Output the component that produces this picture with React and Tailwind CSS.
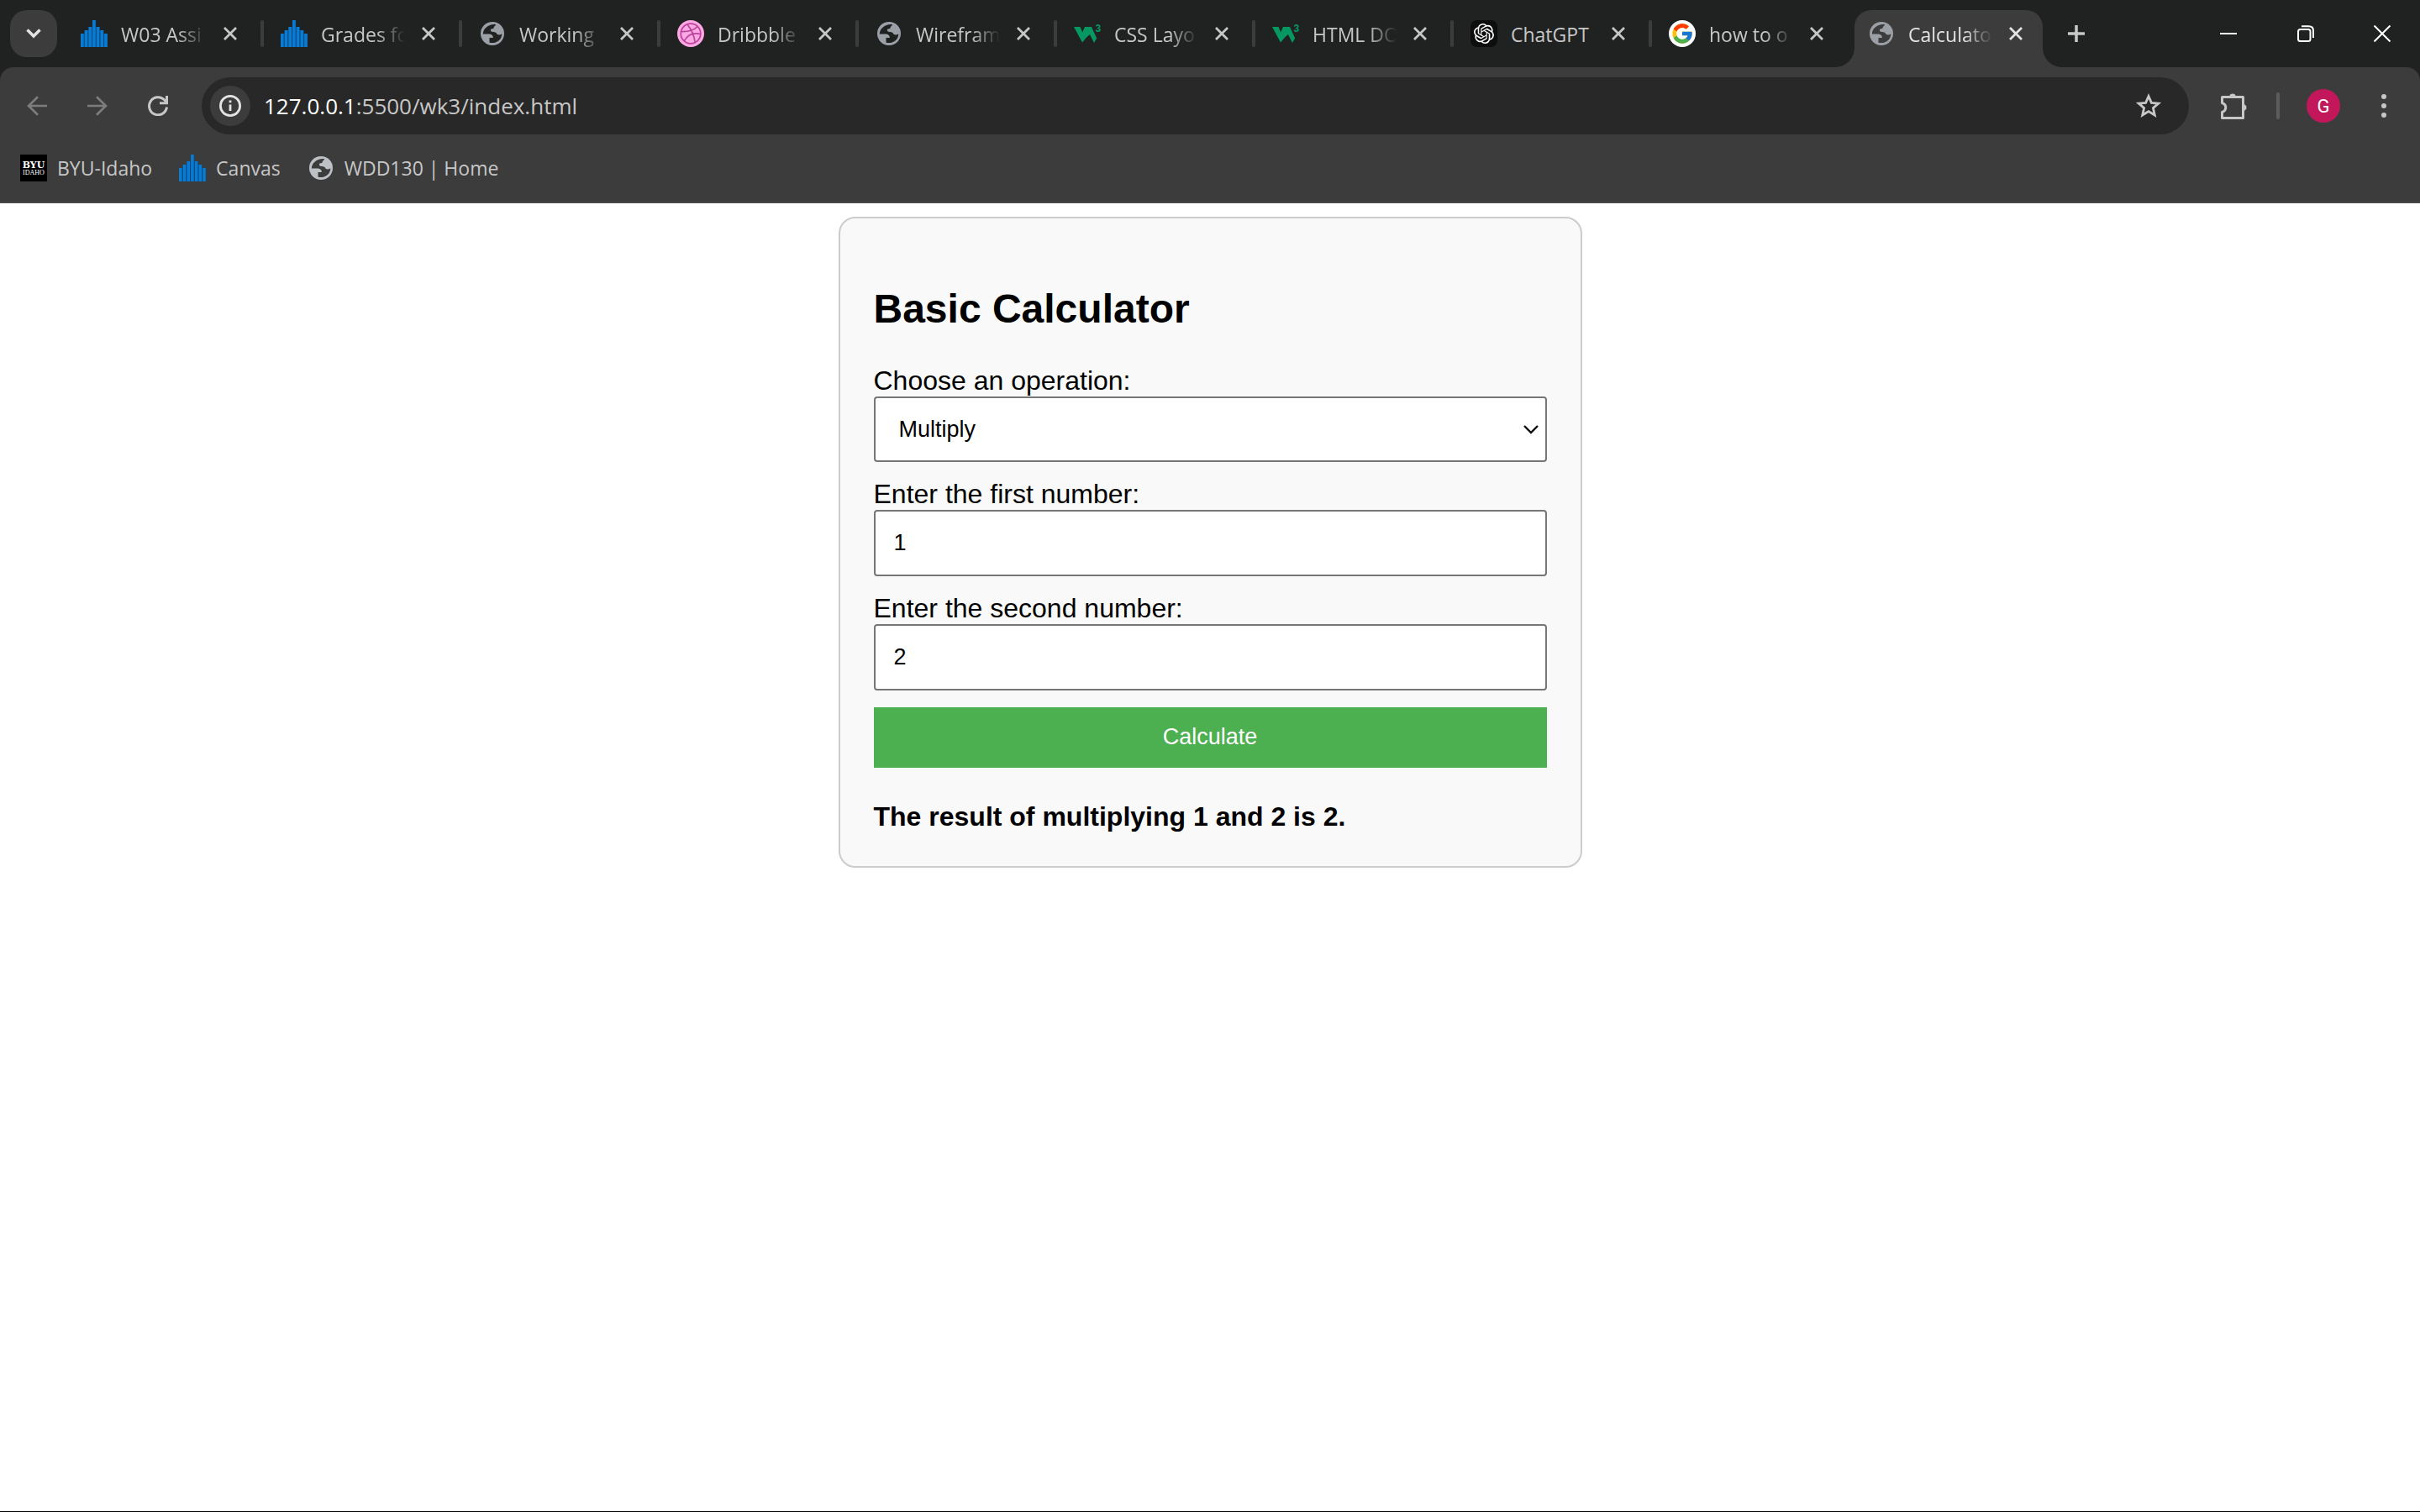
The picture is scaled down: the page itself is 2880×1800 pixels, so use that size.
import { useState } from "react";
import { SiOpenai } from "react-icons/si";
import { FcGoogle } from "react-icons/fc";

function CanvasLogo() {
  const heights = [16, 20, 24, 32, 24, 20, 16];
  return (
    <svg viewBox="0 0 32 32" className="size-8 shrink-0" aria-hidden="true">
      <path
        fill="#00477c"
        d="M0 16H4.6V12H9.2V8H13.8V0H18.2V8H22.8V12H27.4V16H32V32H0Z"
      />
      {heights.map((h, i) => (
        <rect key={i} x={i * 4.7} y={32 - h} width="3.6" height={h} fill="#0a7bd1" />
      ))}
    </svg>
  );
}

function Globe({ color = "#9aa0a6", hole = "#202222" }) {
  return (
    <svg viewBox="-2 -2 32 32" className="size-8 shrink-0" aria-hidden="true">
      <circle cx="14" cy="14" r="14" fill={color} />
      <path
        fill={hole}
        d="M18 3C10 2 3 7.500 2.800 14.500H10.500C13.500 14.800 15 16.500 14.800 19H10.500V24.700C18.500 26.500 25.300 21.500 25.300 14.200C23.500 15.600 21.200 15.800 19.500 14.800C19 12.800 17.300 12 15 12C12.500 12 11.300 11 12.200 8.800C13.500 7.800 15.500 9 15.700 6.800C15.800 5 18 5 18 3Z"
      />
    </svg>
  );
}

function Dribbble() {
  return (
    <svg viewBox="0 0 32 32" className="size-8 shrink-0" fill="none" aria-hidden="true">
      <circle cx="16" cy="16" r="16" fill="#ffa8e6" />
      <g stroke="#b8459a" strokeWidth="1.700">
        <circle cx="16" cy="16" r="11.800" />
        <path d="M12 5.200C16.500 10.500 20 17.500 21.200 26.500" />
        <path d="M4.500 13.500C12 13.800 20 12 24 7.500" />
        <path d="M8.300 24.800C12 18 19 14.500 27.800 16.500" />
      </g>
    </svg>
  );
}

function W3Logo() {
  return (
    <svg viewBox="0 0 32 32" className="size-8 shrink-0" aria-hidden="true">
      <path
        fill="#059862"
        d="M0 8H7.500L10.200 14.500L13 8H21L27.200 21.500L24 27L19 17L15.500 20L10 26.500Z"
      />
      <text
        x="25.500"
        y="14"
        fontSize="12"
        fontFamily="Liberation Sans, sans-serif"
        fontWeight="700"
        fill="#059862"
      >
        3
      </text>
    </svg>
  );
}

function ChatGptLogo() {
  return (
    <span className="flex size-8 shrink-0 items-center justify-center rounded-lg bg-[#0d0d0d] text-white">
      <SiOpenai className="size-6" />
    </span>
  );
}

function GoogleLogo() {
  return (
    <span className="flex size-8 shrink-0 items-center justify-center rounded-full bg-white">
      <FcGoogle className="size-7" />
    </span>
  );
}

function ByuLogo() {
  return (
    <svg viewBox="0 0 32 32" className="size-8 shrink-0" aria-hidden="true">
      <rect width="32" height="32" fill="#000" />
      <text x="16" y="15.500" textAnchor="middle" fontSize="11" fontWeight="700" fontFamily="DejaVu Serif, serif" fill="#fff">
        BYU
      </text>
      <text x="16" y="23.500" textAnchor="middle" fontSize="8" fontFamily="Liberation Serif, serif" fill="#fff">
        IDAHO
      </text>
    </svg>
  );
}

function Cross() {
  return (
    <svg viewBox="0 0 16 16" className="size-4" stroke="currentColor" strokeWidth="2.800" aria-hidden="true">
      <path d="M1 1L15 15M15 1L1 15" />
    </svg>
  );
}

const tabs = [
  { title: "W03 Assi", icon: <CanvasLogo /> },
  { title: "Grades fo", icon: <CanvasLogo /> },
  { title: "Working", icon: <Globe /> },
  { title: "Dribbble", icon: <Dribbble /> },
  { title: "Wirefram", icon: <Globe /> },
  { title: "CSS Layo", icon: <W3Logo /> },
  { title: "HTML DO", icon: <W3Logo /> },
  { title: "ChatGPT", icon: <ChatGptLogo />, fits: true },
  { title: "how to o", icon: <GoogleLogo /> },
];

const TITLE = "min-w-0 flex-1 overflow-hidden pt-[2px] whitespace-nowrap";
const FADED = TITLE + " [mask-image:linear-gradient(to_right,black_66%,transparent)]";

function Tab({ tab, first }) {
  return (
    <div className={first ? "flex h-14 w-[238px] items-center pr-5" : "flex h-14 w-[236px] items-center pr-5"}>
      <span className={first ? "h-8 w-1" : "h-8 w-1 rounded-full bg-[#3c3c3c]"} />
      <button type="button" className="ml-5 flex min-w-0 flex-1 items-center gap-4 text-left">
        {tab.icon}
        <span className={tab.fits ? TITLE : FADED}>{tab.title}</span>
      </button>
      <button type="button" aria-label={"Close " + tab.title} className="ml-3 flex size-8 items-center justify-center">
        <Cross />
      </button>
    </div>
  );
}

function Flare({ className, d }) {
  return (
    <svg viewBox="0 0 24 24" className={className} fill="#3c3c3c" aria-hidden="true">
      <path d={d} />
    </svg>
  );
}

function TabStrip() {
  return (
    <div className="flex h-20 items-start bg-[#202222] pt-3 text-[23px] text-[#c7c7c7]">
      <button
        type="button"
        aria-label="Search tabs"
        className="mr-1 ml-3 flex h-14 w-14 items-center justify-center rounded-[20px] bg-[#3c3c3c] text-[#e3e3e3]"
      >
        <svg viewBox="0 0 18 12" className="h-3 w-[18px]" fill="none" stroke="currentColor" strokeWidth="3.500" aria-hidden="true">
          <path d="M1.500 1.500L9 9L16.500 1.500" />
        </svg>
      </button>
      {tabs.map((tab, i) => (
        <Tab key={tab.title} tab={tab} first={i === 0} />
      ))}
      <div className="relative ml-[9px] flex h-17 w-56 items-start rounded-t-[20px] bg-[#3c3c3c] px-4 text-[#e3e3e3]">
        <Flare className="absolute bottom-0 -left-6 size-6" d="M24 0V24H0C14 24 24 14 24 0Z" />
        <Flare className="absolute -right-6 bottom-0 size-6" d="M0 0V24H24C10 24 0 14 0 0Z" />
        <div className="flex h-14 w-full items-center">
          <button type="button" className="flex min-w-0 flex-1 items-center gap-4 text-left">
            <Globe hole="#3c3c3c" />
            <span className={FADED}>Calculato</span>
          </button>
          <button type="button" aria-label="Close Calculator" className="ml-3 flex size-8 items-center justify-center">
            <Cross />
          </button>
        </div>
      </div>
      <button type="button" aria-label="New tab" className="ml-3 flex size-14 items-center justify-center">
        <svg viewBox="0 0 20 20" className="size-5" stroke="currentColor" strokeWidth="3.500" aria-hidden="true">
          <path d="M10 0V20M0 10H20" />
        </svg>
      </button>
      <div className="ml-auto flex text-white">
        <button type="button" aria-label="Minimize" className="flex h-14 w-[92px] items-center justify-center">
          <span className="h-[2px] w-5 bg-white" />
        </button>
        <button type="button" aria-label="Restore" className="flex h-14 w-[92px] items-center justify-center">
          <svg viewBox="0 0 20 20" className="size-5" fill="none" stroke="currentColor" strokeWidth="2" aria-hidden="true">
            <rect x="1" y="5" width="14.500" height="14" rx="2.500" />
            <path d="M5 1.200H13.500C17 1.200 19 3.200 19 6.500V15" />
          </svg>
        </button>
        <button type="button" aria-label="Close" className="flex h-14 w-[90px] items-center justify-center">
          <svg viewBox="0 0 20 20" className="size-5" stroke="currentColor" strokeWidth="2" aria-hidden="true">
            <path d="M0.500 0.500L19.500 19.500M19.500 0.500L0.500 19.500" />
          </svg>
        </button>
      </div>
    </div>
  );
}

function Toolbar() {
  return (
    <div className="flex h-23 items-center pr-[7px] pl-2 text-[#c7c7c7]">
      <button type="button" aria-label="Back" className="flex size-18 items-center justify-center text-[#7d7d7d]">
        <svg viewBox="0 0 24 24" className="size-6" fill="none" stroke="currentColor" strokeWidth="2.600" aria-hidden="true">
          <path d="M13 1.200L2 12L13 22.800M2 12H24" />
        </svg>
      </button>
      <button type="button" aria-label="Forward" className="flex size-18 items-center justify-center text-[#7d7d7d]">
        <svg viewBox="0 0 24 24" className="size-6" fill="none" stroke="currentColor" strokeWidth="2.600" aria-hidden="true">
          <path d="M11 1.200L22 12L11 22.800M22 12H0" />
        </svg>
      </button>
      <button type="button" aria-label="Reload" className="flex size-18 items-center justify-center">
        <svg viewBox="0 0 24 24" className="size-6" fill="none" stroke="currentColor" strokeWidth="3" aria-hidden="true">
          <path d="M22.500 13.500A10.500 10.500 0 1 1 19.500 4.800L22 7.500" />
          <path d="M22.500 0V8.700H14" />
        </svg>
      </button>
      <div className="ml-4 flex h-17 flex-1 items-center rounded-full bg-[#282828] pr-8 pl-[10px]">
        <button type="button" aria-label="View site information" className="flex size-12 items-center justify-center rounded-full bg-[#3c3c3c] text-[#e3e3e3]">
          <svg viewBox="0 0 26 26" className="size-[26px]" fill="none" stroke="currentColor" strokeWidth="2.800" aria-hidden="true">
            <circle cx="13" cy="13" r="11.600" />
            <path d="M13 11.500V19M13 6.500V9.300" />
          </svg>
        </button>
        <p className="ml-4 flex-1 text-[26px] text-[#c7c7c7]">
          <span className="text-white">127.0.0.1</span>:5500/wk3/index.html
        </p>
        <button type="button" aria-label="Bookmark this page" className="flex size-8 items-center justify-center">
          <svg viewBox="0 0 32 32" className="size-8" fill="none" stroke="currentColor" strokeWidth="2.800" aria-hidden="true">
            <path d="M16 4.500L19.400 12.300L27.800 13L21.400 18.600L23.300 27L16 22.600L8.700 27L10.600 18.600L4.200 13L12.600 12.300Z" />
          </svg>
        </button>
      </div>
      <button type="button" aria-label="Extensions" className="ml-[38px] flex size-8 items-center justify-center">
        <svg viewBox="0 0 32 32" className="size-8" aria-hidden="true">
          <path
            fill="none"
            stroke="currentColor"
            strokeWidth="3"
            strokeLinejoin="round"
            d="M1.500 5.500H26.500V30.500H1.500V23.500C7.200 21.500 7.200 14.500 1.500 12.500Z"
          />
          <path fill="currentColor" d="M10 5A4.200 5 0 0 1 18 5ZM27 14A5 4.200 0 0 1 27 22Z" />
        </svg>
      </button>
      <span className="ml-[34px] h-8 w-1 rounded-full bg-[#5c5c5c]" />
      <button
        type="button"
        aria-label="Profile"
        className="ml-8 flex size-10 items-center justify-center rounded-full bg-[#c2185b] font-[Roboto,sans-serif] text-[22px] text-white"
      >
        G
      </button>
      <button type="button" aria-label="Menu" className="ml-4 flex size-18 items-center justify-center">
        <svg viewBox="0 0 6 28" className="h-7 w-[6px]" fill="currentColor" aria-hidden="true">
          <circle cx="3" cy="3" r="3" />
          <circle cx="3" cy="14" r="3" />
          <circle cx="3" cy="25" r="3" />
        </svg>
      </button>
    </div>
  );
}

function Bookmarks() {
  return (
    <nav className="flex h-[68px] items-center gap-8 px-6 pb-3 text-[23px] text-[#c7c7c7]">
      <a href="#byu" className="flex items-center gap-3">
        <ByuLogo />
        BYU-Idaho
      </a>
      <a href="#canvas" className="flex items-center gap-3">
        <CanvasLogo />
        Canvas
      </a>
      <a href="#home" className="flex items-center gap-3">
        <Globe color="#bdc1c6" hole="#3c3c3c" />
        WDD130 | Home
      </a>
    </nav>
  );
}

const operations = {
  add: ["Add", "adding", (a, b) => a + b],
  subtract: ["Subtract", "subtracting", (a, b) => a - b],
  multiply: ["Multiply", "multiplying", (a, b) => a * b],
  divide: ["Divide", "dividing", (a, b) => a / b],
};

const FIELD = "block w-full rounded-[4px] border-2 border-[#767676] bg-white text-[27px] text-black";

function Calculator() {
  const [op, setOp] = useState("multiply");
  const [first, setFirst] = useState("1");
  const [second, setSecond] = useState("2");
  const [result, setResult] = useState("The result of multiplying 1 and 2 is 2.");

  function calculate(event) {
    event.preventDefault();
    const [, verb, run] = operations[op];
    setResult(`The result of ${verb} ${first} and ${second} is ${run(Number(first), Number(second))}.`);
  }

  return (
    <form
      onSubmit={calculate}
      className="mx-auto w-full max-w-[885px] rounded-[20px] border-2 border-[#ccc] bg-[#f9f9f9] p-10 font-['Liberation_Sans',Arial,sans-serif] text-[32px] leading-[37px] text-black"
    >
      <h1 className="my-10 text-[48px] leading-[55px] font-bold">Basic Calculator</h1>
      <label htmlFor="operation" className="block">
        Choose an operation:
      </label>
      <div className="relative mb-5">
        <select
          id="operation"
          value={op}
          onChange={(e) => setOp(e.target.value)}
          className={FIELD + " h-[78px] appearance-none pl-7"}
        >
          {Object.entries(operations).map(([key, [label]]) => (
            <option key={key} value={key}>
              {label}
            </option>
          ))}
        </select>
        <svg
          viewBox="0 0 18 11"
          className="pointer-events-none absolute top-[34px] right-[10px] h-[11px] w-[18px]"
          fill="none"
          stroke="#111"
          strokeWidth="2.400"
          aria-hidden="true"
        >
          <path d="M1 1L9 9L17 1" />
        </svg>
      </div>
      <label htmlFor="first" className="block">
        Enter the first number:
      </label>
      <input
        id="first"
        type="number"
        value={first}
        onChange={(e) => setFirst(e.target.value)}
        className={FIELD + " mb-5 h-[79px] px-[22px]"}
      />
      <label htmlFor="second" className="block">
        Enter the second number:
      </label>
      <input
        id="second"
        type="number"
        value={second}
        onChange={(e) => setSecond(e.target.value)}
        className={FIELD + " mb-5 h-[79px] px-[22px]"}
      />
      <button type="submit" className="block h-[72px] w-full bg-[#4caf50] pb-[2px] text-[27px] text-white">
        Calculate
      </button>
      <p className="mt-10 font-bold">{result}</p>
    </form>
  );
}

export default function App() {
  return (
    <div className="flex min-h-screen flex-col border-b border-black bg-white font-['Open_Sans','Noto_Sans',sans-serif]">
      <header className="bg-[#202222]">
        <TabStrip />
        <div className="rounded-t-2xl border-b-2 border-[#474747] bg-[#3c3c3c]">
          <Toolbar />
          <Bookmarks />
        </div>
      </header>
      <main className="flex-1 px-4 pt-4">
        <Calculator />
      </main>
    </div>
  );
}
